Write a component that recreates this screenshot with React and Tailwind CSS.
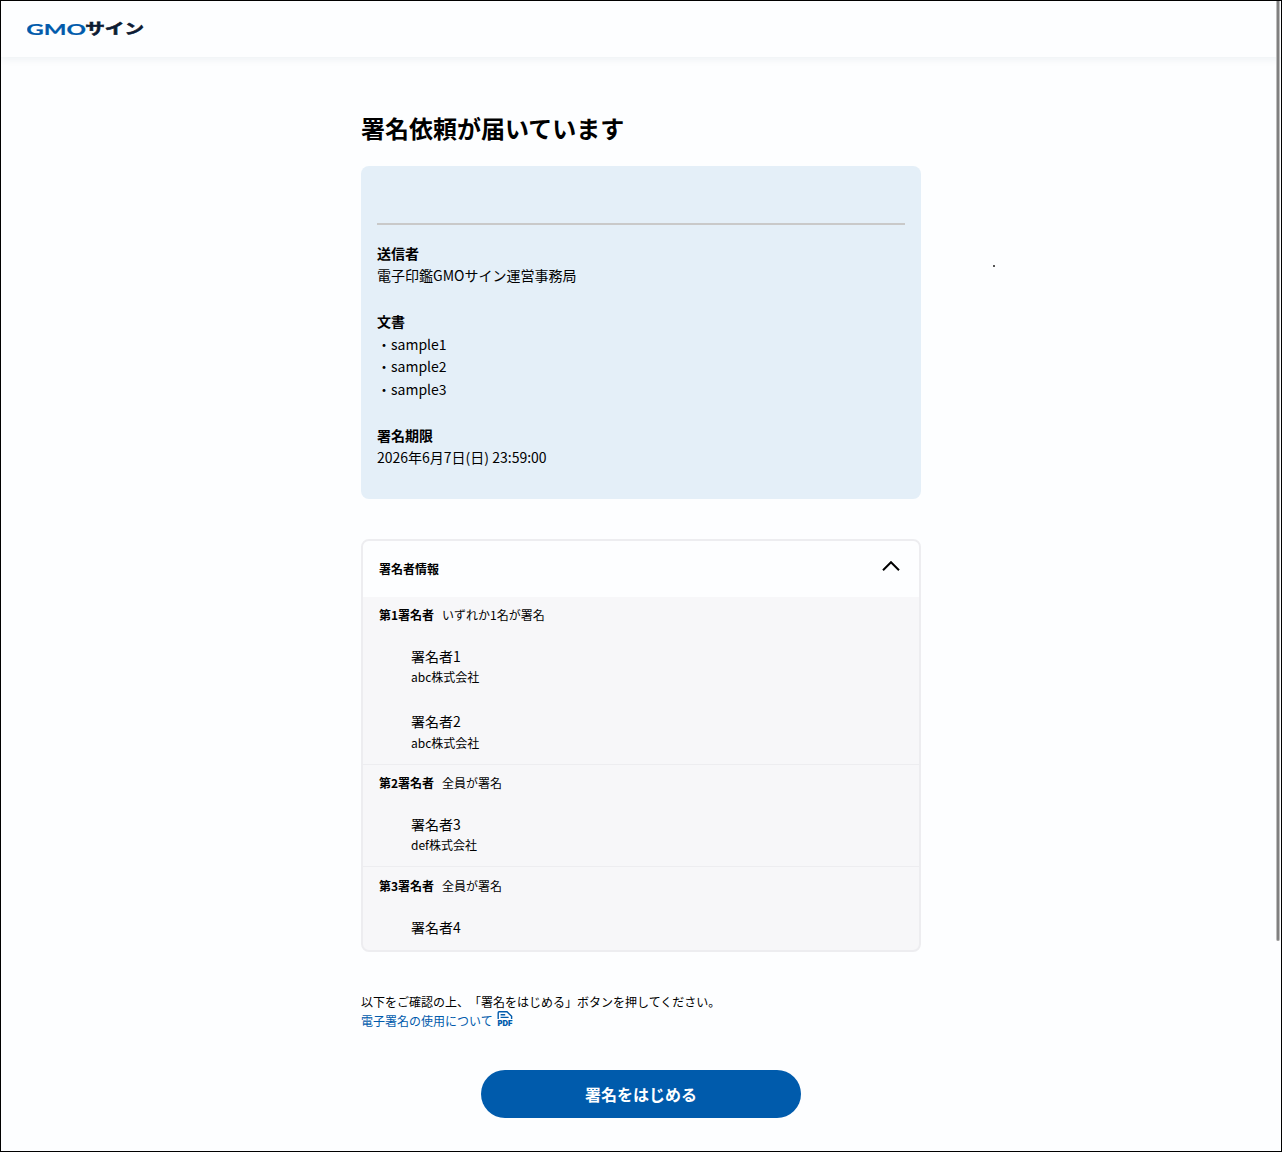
import { useState } from "react";

const documents = ["sample1", "sample2", "sample3"];

const signerGroups = [
    {
        title: "第1署名者",
        rule: "いずれか1名が署名",
        signers: [
            { name: "署名者1", company: "abc株式会社" },
            { name: "署名者2", company: "abc株式会社" },
        ],
    },
    {
        title: "第2署名者",
        rule: "全員が署名",
        signers: [{ name: "署名者3", company: "def株式会社" }],
    },
    {
        title: "第3署名者",
        rule: "全員が署名",
        signers: [{ name: "署名者4" }],
    },
];

function Logo() {
    return (
        <svg width="120" height="32" viewBox="0 0 120 32" className="block">
            <text
                transform="translate(-0.8 21.6) scale(1.5 1)"
                textLength="39.8"
                lengthAdjust="spacingAndGlyphs"
                fontSize="16"
                fontWeight="700"
                fill="#005bac"
                stroke="#005bac"
                strokeWidth="0.2"
                className="font-['Lato',sans-serif]"
            >
                GMO
            </text>
            <text
                transform="translate(58.2 21.4) scale(1.38 1)"
                textLength="42.6"
                lengthAdjust="spacingAndGlyphs"
                fontSize="14.5"
                fontWeight="700"
                fill="#0d1b33"
                stroke="#0d1b33"
                strokeWidth="0.6"
                className="font-['Noto_Sans_CJK_JP',sans-serif]"
            >
                サイン
            </text>
        </svg>
    );
}

function PdfIcon() {
    return (
        <svg width="16" height="16" viewBox="0 0 16 16" fill="none" stroke="#005bac" strokeWidth="1.4">
            <path d="M1.2 8V1.7Q1.2 .8 2.1 .8H10L14.6 5.2V8" />
            <path d="M3.6 3.8H8.2M3.6 6.4H11.6" />
            <text
                x="0.4"
                y="15.2"
                textLength="15"
                lengthAdjust="spacingAndGlyphs"
                fontSize="7.6"
                fontWeight="900"
                fill="#005bac"
                stroke="none"
                className="font-['Inter',sans-serif]"
            >
                PDF
            </text>
        </svg>
    );
}

function InfoBlock({ label, children }) {
    return (
        <div>
            <p className="font-bold">{label}</p>
            {children}
        </div>
    );
}

export default function App() {
    const [open, setOpen] = useState(true);
    return (
        <div className="relative flex h-[1152px] w-[1282px] flex-col overflow-hidden border border-black bg-[#fdfeff] font-['Noto_Sans_CJK_JP',sans-serif] text-sm leading-[22.4px] text-black [text-spacing-trim:space-all]">
            <header className="flex h-14 shrink-0 items-center bg-[#fdfeff] pl-[26px] shadow-[0_2px_8px_rgba(20,50,80,0.07)]">
                <Logo />
            </header>
            <main className="mx-auto flex w-[560px] flex-col">
                <h1 className="mt-[52px] text-2xl leading-[38px] font-bold">署名依頼が届いています</h1>
                <section className="mt-[19px] h-[333px] rounded-lg bg-[#e4eff8] px-4">
                    <div className="h-[59px] border-b-2 border-[#c9c9c9]"></div>
                    <div className="flex flex-col gap-[23.6px] pt-[17px]">
                        <InfoBlock label="送信者">
                            <p>電子印鑑GMOサイン運営事務局</p>
                        </InfoBlock>
                        <InfoBlock label="文書">
                            {documents.map(name => (
                                <p key={name}>・{name}</p>
                            ))}
                        </InfoBlock>
                        <InfoBlock label="署名期限">
                            <p>2026年6月7日(日) 23:59:00</p>
                        </InfoBlock>
                    </div>
                </section>
                <section className="mt-10 h-[413px] overflow-hidden rounded-lg border-2 border-[#ededf0] bg-[#f7f7f9]">
                    <button
                        type="button"
                        onClick={() => setOpen(!open)}
                        className="flex h-14 w-full items-center justify-between bg-[#fdfeff] pr-[18px] pl-4"
                    >
                        <span className="text-xs leading-[19.2px] font-bold">署名者情報</span>
                        <svg width="20" height="12" viewBox="0 0 20 12" fill="none" stroke="#000" strokeWidth="2" className="mb-1.5">
                            <path d="M2 10.2L10 2.2L18 10.2" />
                        </svg>
                    </button>
                    {open && signerGroups.map(group => (
                        <div key={group.title} className="border-b border-[#ededf0] last:border-b-0 last:pt-[0.5px]">
                            <div className="flex h-[35.8px] items-center gap-2 px-4 text-xs leading-[19.2px]">
                                <span className="font-bold">{group.title}</span>
                                <span>{group.rule}</span>
                            </div>
                            {group.signers.map(signer => (
                                <div key={signer.name} className="py-3 pl-12">
                                    <p>{signer.name}</p>
                                    {signer.company && <p className="text-xs leading-[19.2px]">{signer.company}</p>}
                                </div>
                            ))}
                        </div>
                    ))}
                </section>
                <div className="mt-[39.6px] text-xs leading-[19.2px]">
                    <p>以下をご確認の上、「署名をはじめる」ボタンを押してください。</p>
                    <a href="#" className="flex h-[19.2px] items-center gap-1 text-[#005bac]">
                        電子署名の使用について
                        <span className="mb-0.5">
                            <PdfIcon />
                        </span>
                    </a>
                </div>
                <button className="mt-10 h-12 w-80 self-center rounded-full bg-[#005bac] text-base font-bold text-white">
                    署名をはじめる
                </button>
            </main>
            <span className="absolute top-[264px] left-[992px] size-[2px] bg-[#555555]"></span>
            <div className="absolute top-0 right-px h-[940px] w-1 rounded-b-full border-x border-[#bdbdbd] bg-[#808080]"></div>
        </div>
    );
}
